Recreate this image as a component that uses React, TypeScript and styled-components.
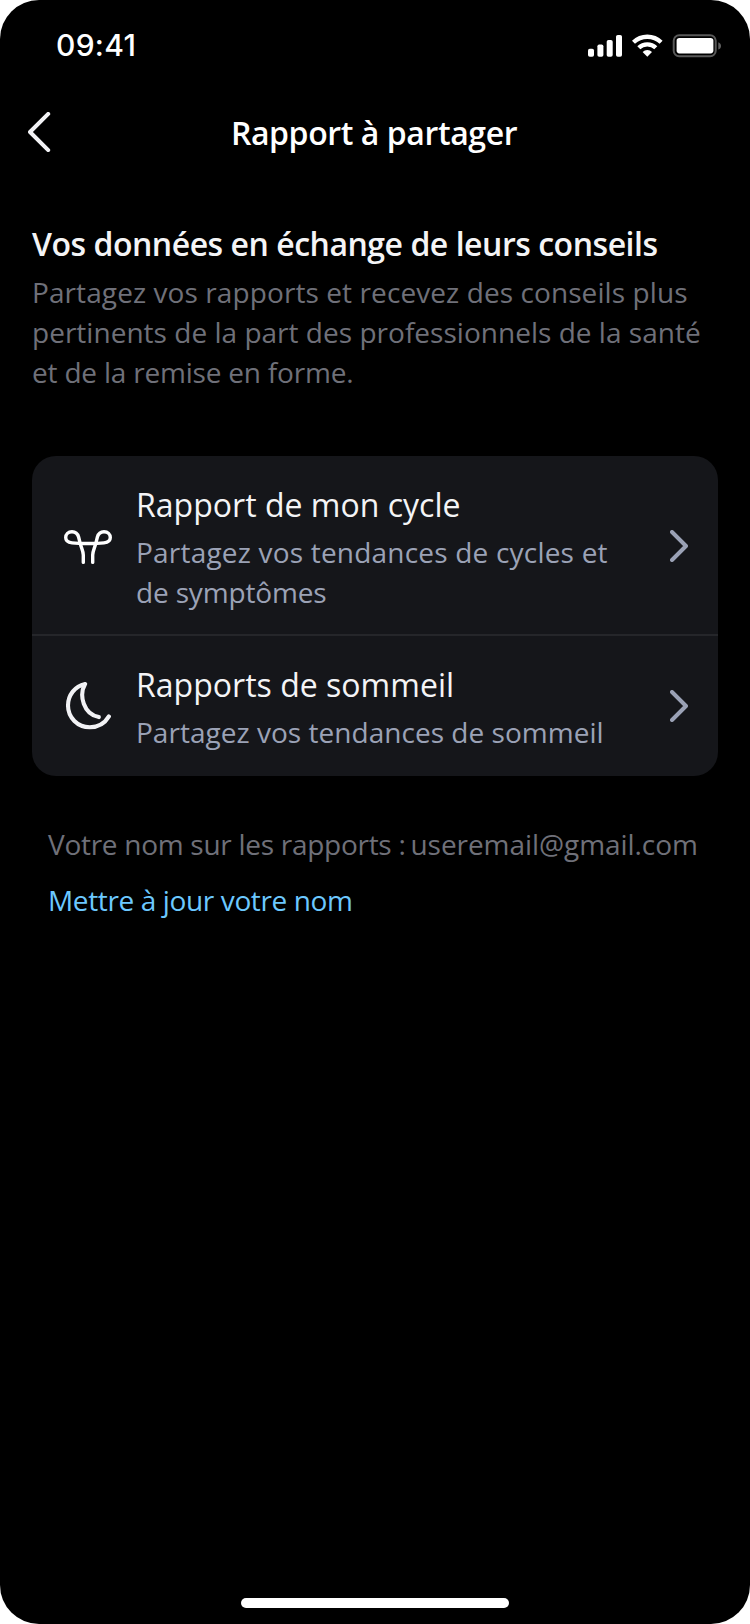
import React from 'react';
import styled, { createGlobalStyle } from 'styled-components';

const GlobalStyle = createGlobalStyle`
  *, *::before, *::after { box-sizing: border-box; }
  body { margin: 0; background: #ffffff; }
  h1, h2, h3, p { margin: 0; }
`;

const Screen = styled.main`
  display: flex;
  flex-direction: column;
  width: 750px;
  height: 1624px;
  overflow: hidden;
  border-radius: 39px;
  background: #000000;
  color: #f4f4f6;
  font-family: 'Open Sans', sans-serif;
`;

const StatusBar = styled.header`
  display: flex;
  align-items: flex-start;
  justify-content: space-between;
  height: 88px;
  padding: 25px 28px 0 56px;
`;

const Clock = styled.time`
  color: #ffffff;
  font: 500 30px/40px Inter, sans-serif;
  letter-spacing: 0.3px;
`;

const StatusIcons = styled.svg`
  display: block;
  margin-top: 9px;
`;

const NavBar = styled.nav`
  display: grid;
  grid-template-columns: 72px 1fr 72px;
  align-items: center;
  height: 88px;
`;

const BackButton = styled.button`
  display: flex;
  padding: 0 0 0 28px;
  border: 0;
  background: none;
  color: #f2f2f5;
`;

const NavTitle = styled.h1`
  padding: 2px 2px 0 0;
  color: #ffffff;
  font-size: 32px;
  font-weight: 600;
  line-height: 40px;
  letter-spacing: -0.41px;
  text-align: center;
`;

const Intro = styled.section`
  padding: 48px 32px 0;
`;

const IntroTitle = styled.h2`
  color: #f4f4f6;
  font-size: 32px;
  font-weight: 600;
  line-height: 40px;
  letter-spacing: -0.475px;
`;

const IntroText = styled.p`
  margin-top: 8px;
  color: #6f7079;
`;

const TextLine = styled.span<{ $spacing: number; $block?: boolean }>`
  display: ${({ $block }) => ($block ? 'block' : 'inline')};
  font-size: 28px;
  line-height: 40px;
  letter-spacing: ${({ $spacing }) => $spacing}px;
  white-space: nowrap;
`;

const ReportList = styled.section`
  margin: 64px 32px 0;
  overflow: hidden;
  border-radius: 24px;
  background: #15161a;
`;

const ReportRow = styled.article<{ $divided?: boolean }>`
  display: flex;
  align-items: center;
  gap: 24px;
  padding: 29px 30px 24px 32px;
  box-shadow: ${({ $divided }) => ($divided ? 'inset 0 -2px #25262a' : 'none')};
`;

const ReportBody = styled.div`
  flex: 1;
  min-width: 0;
`;

const ReportTitle = styled.h3`
  color: #f4f4f6;
  font-size: 32px;
  font-weight: 400;
  line-height: 40px;
  letter-spacing: 0.02px;
`;

const ReportText = styled.p`
  margin-top: 7px;
  color: #9ba2b6;
`;

const RowIcon = styled.svg`
  flex: none;
  margin-bottom: 5px;
`;

const NameSection = styled.section`
  display: flex;
  flex-direction: column;
  align-items: flex-start;
  gap: 16px;
  padding: 48px 48px 0;
`;

const NameLine = styled.p`
  display: flex;
  gap: 5px;
  color: #6f7079;
`;

const UpdateLink = styled.a`
  color: #6cc8ff;
  text-decoration: none;
`;

const HomeIndicator = styled.div`
  align-self: center;
  width: 268px;
  height: 10px;
  margin: auto 0 16px;
  border-radius: 5px;
  background: #ffffff;
`;

function DeviceStatus() {
  return (
    <StatusIcons width="134" height="24" viewBox="0 0 134 24">
      <g fill="#fff">
        <rect x="0" y="14.8" width="6" height="8" rx="1.8" />
        <rect x="9.4" y="10.5" width="6" height="12.3" rx="1.8" />
        <rect x="18.7" y="6" width="6" height="16.8" rx="1.8" />
        <rect x="28" y="1" width="6" height="21.8" rx="1.8" />
        <path d="M59.3 22.8 54.6 18a6.7 6.7 0 0 1 9.4 0Z" />
      </g>
      <g fill="none" stroke="#fff" strokeWidth="4.3">
        <path d="M45.5 8.3a19.9 19.9 0 0 1 27.6 0" />
        <path d="M50.8 13.8a12.2 12.2 0 0 1 17 0" />
      </g>
      <rect x="85.7" y="1.3" width="42" height="20.9" rx="5.5" fill="none" stroke="#595959" strokeWidth="2" />
      <rect x="88.6" y="4" width="36.8" height="15.4" rx="2.8" fill="#fff" />
      <path d="M130.3 8.2c1.7.7 2.7 2 2.7 3.7s-1 3-2.7 3.7Z" fill="#606060" />
    </StatusIcons>
  );
}

function BackIcon() {
  return (
    <svg width="24" height="40" viewBox="0 0 24 40" fill="none" stroke="currentColor" strokeWidth="4" strokeLinecap="round" strokeLinejoin="round">
      <path d="M20.2 1.9 2 20l18.2 18.1" />
    </svg>
  );
}

function CycleIcon() {
  return (
    <RowIcon width="48" height="48" viewBox="0 0 48 48" fill="none" stroke="#fff" strokeWidth="3.4" strokeLinecap="round" strokeLinejoin="round">
      <path d="M19.3 40.4V33C19.3 29 17.3 26 16 20.6L14.6 15C13.6 11.5 11.5 9.7 8 9.7C4.2 9.7 1.7 12.3 1.7 15.6C1.7 19 4.3 20.6 8 20.9C13 21.4 18 21.5 24 21.5S35 21.4 40 20.9C43.7 20.6 46.3 19 46.3 15.6C46.3 12.3 43.8 9.7 40 9.7C36.5 9.7 34.4 11.5 33.4 15L32 20.6C30.7 26 28.7 29 28.7 33V40.4" />
    </RowIcon>
  );
}

function MoonIcon() {
  return (
    <RowIcon width="48" height="48" viewBox="0 0 48 48" fill="none" stroke="#f2f2f5" strokeWidth="4.1" strokeLinecap="round" strokeLinejoin="round">
      <path d="M34.8 35.1C28 33.8 22.3 28.8 19.8 21.8C17.6 15.6 17.6 8 21.1 2C11 4.2 4 12.9 4 23.5C4 35.7 13.7 45.2 25.8 45.2C34.2 45.2 41 41 44.9 34.4" />
    </RowIcon>
  );
}

function ForwardIcon() {
  return (
    <RowIcon width="18" height="32" viewBox="0 0 18 32" fill="none" stroke="#9ba2b6" strokeWidth="4" strokeLinecap="round" strokeLinejoin="round">
      <path d="M2 2 16 16 2 30" />
    </RowIcon>
  );
}

export default function App() {
  return (
    <>
      <GlobalStyle />
      <Screen>
        <StatusBar>
          <Clock>09:41</Clock>
          <DeviceStatus />
        </StatusBar>
        <NavBar>
          <BackButton aria-label="Retour">
            <BackIcon />
          </BackButton>
          <NavTitle>Rapport à partager</NavTitle>
        </NavBar>
        <Intro>
          <IntroTitle>Vos données en échange de leurs conseils</IntroTitle>
          <IntroText>
            <TextLine $block $spacing={0.09}>Partagez vos rapports et recevez des conseils plus</TextLine>
            <TextLine $block $spacing={0.02}>pertinents de la part des professionnels de la santé</TextLine>
            <TextLine $block $spacing={-0.2}>et de la remise en forme.</TextLine>
          </IntroText>
        </Intro>
        <ReportList>
          <ReportRow $divided>
            <CycleIcon />
            <ReportBody>
              <ReportTitle>Rapport de mon cycle</ReportTitle>
              <ReportText>
                <TextLine $block $spacing={0.2}>Partagez vos tendances de cycles et</TextLine>
                <TextLine $block $spacing={-0.15}>de symptômes</TextLine>
              </ReportText>
            </ReportBody>
            <ForwardIcon />
          </ReportRow>
          <ReportRow>
            <MoonIcon />
            <ReportBody>
              <ReportTitle>Rapports de sommeil</ReportTitle>
              <ReportText>
                <TextLine $block $spacing={0.03}>Partagez vos tendances de sommeil</TextLine>
              </ReportText>
            </ReportBody>
            <ForwardIcon />
          </ReportRow>
        </ReportList>
        <NameSection>
          <NameLine>
            <TextLine $spacing={-0.28}>Votre nom sur les rapports :</TextLine>
            <TextLine $spacing={-0.06}>useremail@gmail.com</TextLine>
          </NameLine>
          <UpdateLink>
            <TextLine $block $spacing={-0.37}>Mettre à jour votre nom</TextLine>
          </UpdateLink>
        </NameSection>
        <HomeIndicator />
      </Screen>
    </>
  );
}
